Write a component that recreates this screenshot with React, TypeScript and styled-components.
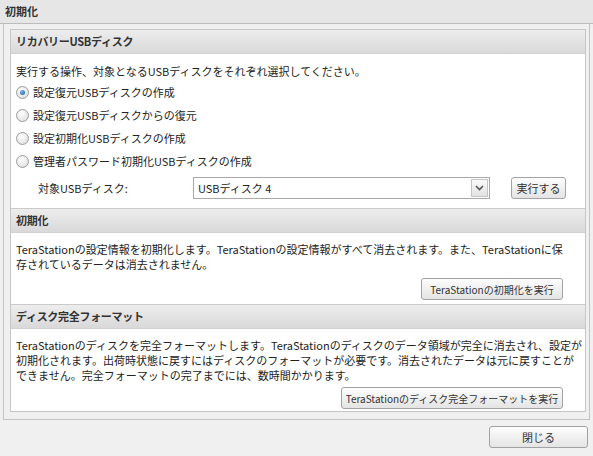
import React from "react";
import styled, { createGlobalStyle } from "styled-components";

const GlobalStyle = createGlobalStyle`
  html, body { margin: 0; padding: 0; }
  body {
    background: #f0f0f0;
    font-family: "Noto Sans CJK JP", "Noto Sans", sans-serif;
    color: #222;
  }
`;

const Page = styled.div`
  width: 593px;
  height: 456px;
  display: flex;
  flex-direction: column;
  background: #f0f0f0;
  overflow: hidden;
`;

const TitleBar = styled.div`
  height: 23px;
  line-height: 23px;
  padding-left: 5px;
  background: #e6e6e6;
  border-bottom: 1px solid #bcbcbc;
  font-size: 11px;
  font-weight: bold;
  color: #333;
`;

const Outer = styled.div`
  margin: 0 3px 0 3px;
  border: 1px solid #c4c4c4;
  border-top: none;
  padding: 5px 3px 7px 6px;
`;

const Inner = styled.div`
  border: 1px solid #c6c6c6;
  background: #fff;
  display: flex;
  flex-direction: column;
`;

const SectionHeader = styled.div<{ $first?: boolean }>`
  height: 23px;
  line-height: 23px;
  padding-left: 5px;
  background: linear-gradient(#ededed, #d9d9d9);
  border-top: ${(p) => (p.$first ? "none" : "1px solid #cacaca")};
  border-bottom: 1px solid #d2d2d2;
  font-size: 11px;
  font-weight: bold;
  color: #333;
  letter-spacing: -0.3px;
`;

const Body = styled.div<{ $pt: number; $pb: number }>`
  padding: ${(p) => p.$pt}px 5px ${(p) => p.$pb}px 5px;
  font-size: 11px;
  line-height: 15px;
  display: flex;
  flex-direction: column;
`;

const Para = styled.div`
  white-space: nowrap;
`;

const OptionList = styled.div`
  margin-top: 2px;
  display: flex;
  flex-direction: column;
`;

const OptionRow = styled.label`
  height: 23px;
  display: flex;
  align-items: center;
  gap: 4px;
`;

const Radio = styled.span<{ $checked?: boolean }>`
  width: 11px;
  height: 11px;
  border-radius: 50%;
  border: 1px solid #9c9c9c;
  background: radial-gradient(circle at 40% 35%, #ffffff, #d8d8d8);
  display: flex;
  align-items: center;
  justify-content: center;
  flex: none;
  &::after {
    content: "";
    display: ${(p) => (p.$checked ? "block" : "none")};
    width: 5px;
    height: 5px;
    border-radius: 50%;
    background: radial-gradient(circle at 40% 35%, #7ab2ea, #1a5aa8);
  }
`;

const TargetRow = styled.div`
  margin-top: 4px;
  height: 22px;
  display: flex;
  align-items: center;
  padding-left: 22px;
`;

const TargetLabel = styled.span`
  width: 155px;
  flex: none;
`;

const Select = styled.div`
  width: 295px;
  height: 20px;
  border: 1px solid #a8a8a8;
  background: #fff;
  display: flex;
  align-items: center;
  flex: none;
`;

const SelectText = styled.span`
  flex: 1;
  padding-left: 4px;
`;

const SelectArrow = styled.span`
  width: 17px;
  height: 18px;
  margin-right: 1px;
  border: 1px solid #c4c4c4;
  background: linear-gradient(#fbfbfb, #e2e2e2);
  display: flex;
  align-items: center;
  justify-content: center;
  box-sizing: border-box;
`;

const Button = styled.button<{ $w: number; $fs?: number }>`
  width: ${(p) => p.$w}px;
  height: 22px;
  padding: 0;
  border: 1px solid #a2a2a2;
  border-radius: 3px;
  background: linear-gradient(#fdfdfd, #e4e4e4);
  font-family: "Noto Sans CJK JP", "Noto Sans", sans-serif;
  font-size: ${(p) => p.$fs ?? 10}px;
  color: #333;
  display: flex;
  align-items: center;
  justify-content: center;
  flex: none;
  white-space: nowrap;
`;

const ExecButton = styled(Button)`
  margin-left: 21px;
`;

const ButtonRow = styled.div<{ $mt: number }>`
  margin-top: ${(p) => p.$mt}px;
  display: flex;
  justify-content: flex-end;
  padding-right: 17px;
`;

const Footer = styled.div`
  display: flex;
  justify-content: flex-end;
  padding: 6px 5px 0 0;
`;

const options = [
  "設定復元USBディスクの作成",
  "設定復元USBディスクからの復元",
  "設定初期化USBディスクの作成",
  "管理者パスワード初期化USBディスクの作成",
];

export default function App() {
  return (
    <Page>
      <GlobalStyle />
      <TitleBar>初期化</TitleBar>
      <Outer>
        <Inner>
          <SectionHeader $first>リカバリーUSBディスク</SectionHeader>
          <Body $pt={10} $pb={9}>
            <Para>実行する操作、対象となるUSBディスクをそれぞれ選択してください。</Para>
            <OptionList>
              {options.map((o, i) => (
                <OptionRow key={o}>
                  <Radio $checked={i === 0} />
                  {o}
                </OptionRow>
              ))}
            </OptionList>
            <TargetRow>
              <TargetLabel>対象USBディスク:</TargetLabel>
              <Select>
                <SelectText>USBディスク 4</SelectText>
                <SelectArrow>
                  <svg width="9" height="6" viewBox="0 0 9 6">
                    <path d="M1 1 L4.5 4.5 L8 1" fill="none" stroke="#555" strokeWidth="1.6" />
                  </svg>
                </SelectArrow>
              </Select>
              <ExecButton $w={55} $fs={11}>実行する</ExecButton>
            </TargetRow>
          </Body>

          <SectionHeader>初期化</SectionHeader>
          <Body $pt={9} $pb={4}>
            <Para>
              TeraStationの設定情報を初期化します。TeraStationの設定情報がすべて消去されます。また、TeraStationに保
            </Para>
            <Para>存されているデータは消去されません。</Para>
            <ButtonRow $mt={6}>
              <Button $w={142}>TeraStationの初期化を実行</Button>
            </ButtonRow>
          </Body>

          <SectionHeader>ディスク完全フォーマット</SectionHeader>
          <Body $pt={9} $pb={2}>
            <Para>
              TeraStationのディスクを完全フォーマットします。TeraStationのディスクのデータ領域が完全に消去され、設定が
            </Para>
            <Para>
              初期化されます。出荷時状態に戻すにはディスクのフォーマットが必要です。消去されたデータは元に戻すことが
            </Para>
            <Para>できません。完全フォーマットの完了までには、数時間かかります。</Para>
            <ButtonRow $mt={4}>
              <Button $w={222}>TeraStationのディスク完全フォーマットを実行</Button>
            </ButtonRow>
          </Body>
        </Inner>
      </Outer>
      <Footer>
        <Button $w={99} $fs={11}>閉じる</Button>
      </Footer>
    </Page>
  );
}
